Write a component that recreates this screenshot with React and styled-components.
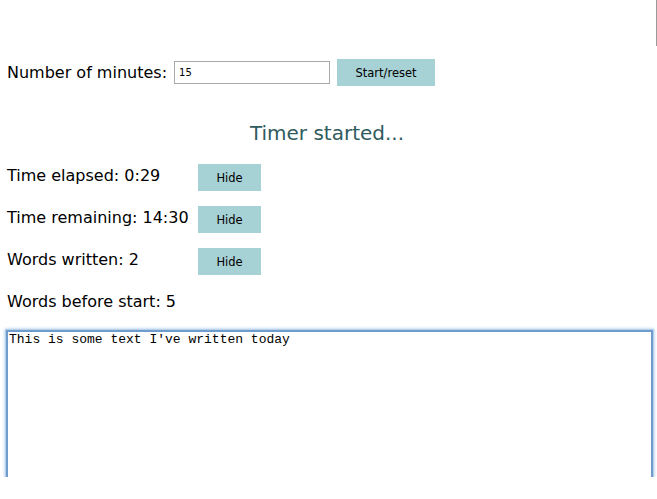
import React from "react";
import styled, { createGlobalStyle } from "styled-components";

const Global = createGlobalStyle`
  html, body { margin: 0; padding: 0; background: #fff; }
  body { font-family: "DejaVu Sans", Verdana, sans-serif; color: #000; }
`;

const Page = styled.div`
  position: relative;
  height: 477px;
  overflow: hidden;
  padding: 59px 4px 0 7px;
  box-sizing: border-box;
  display: flex;
  flex-direction: column;
  & > * { flex-shrink: 0; }
`;

const EdgeLine = styled.div`
  position: absolute;
  top: 0;
  right: 0;
  width: 1px;
  height: 46px;
  background: #9a9a9a;
`;

const Row = styled.div`
  display: flex;
  align-items: center;
  height: 27px;
  margin-bottom: ${(p) => p.$mb || 0}px;
`;

const Label = styled.span`
  font-size: 16px;
  white-space: nowrap;
  min-width: ${(p) => p.$w || 0}px;
  margin-right: ${(p) => p.$mr || 0}px;
  position: relative;
  top: ${(p) => p.$dy || 0}px;
`;

const Input = styled.input`
  width: 156px;
  height: 23px;
  box-sizing: border-box;
  border: 1px solid #a9a9a9;
  padding: 2px 4px;
  font-family: "DejaVu Sans", sans-serif;
  font-size: 10px;
  margin-right: 7px;
  outline: none;
`;

const Button = styled.button`
  background: #a6d1d5;
  border: none;
  height: 27px;
  width: ${(p) => p.$w}px;
  font-family: "DejaVu Sans", Verdana, sans-serif;
  font-size: 11.5px;
  color: #000;
  padding: 0;
  cursor: pointer;
`;

const Status = styled.div`
  text-align: center;
  font-size: 20px;
  color: #2f5b5e;
  margin: 35px 0 19px;
  padding-right: 6px;
`;

const Plain = styled.div`
  font-size: 16px;
  height: 24px;
  margin-top: 2px;
`;

const TextArea = styled.textarea`
  margin: 14px 0 0 -1px;
  width: 647px;
  height: 220px;
  box-sizing: border-box;
  border: 2px solid #6f9bcd;
  box-shadow: 0 0 0 1px #b8d1ea, 0 0 3px 1px #9cc0e6;
  font-family: "Liberation Mono", "Courier New", monospace;
  font-size: 13px;
  padding: 0 1px;
  resize: none;
  outline: none;
  color: #000;
`;

const rows = [
  { label: "Time elapsed: 0:29" },
  { label: "Time remaining: 14:30" },
  { label: "Words written: 2" },
];

export default function App() {
  return (
    <>
      <Global />
      <Page>
        <EdgeLine />
        <Row>
          <Label $mr={7}>Number of minutes:</Label>
          <Input defaultValue="15" />
          <Button $w={98}>Start/reset</Button>
        </Row>
        <Status>Timer started...</Status>
        {rows.map((r) => (
          <Row key={r.label} $mb={15}>
            <Label $w={191} $dy={-2}>{r.label}</Label>
            <Button $w={63}>Hide</Button>
          </Row>
        ))}
        <Plain>Words before start: 5</Plain>
        <TextArea defaultValue="This is some text I've written today" spellCheck={false} />
      </Page>
    </>
  );
}
